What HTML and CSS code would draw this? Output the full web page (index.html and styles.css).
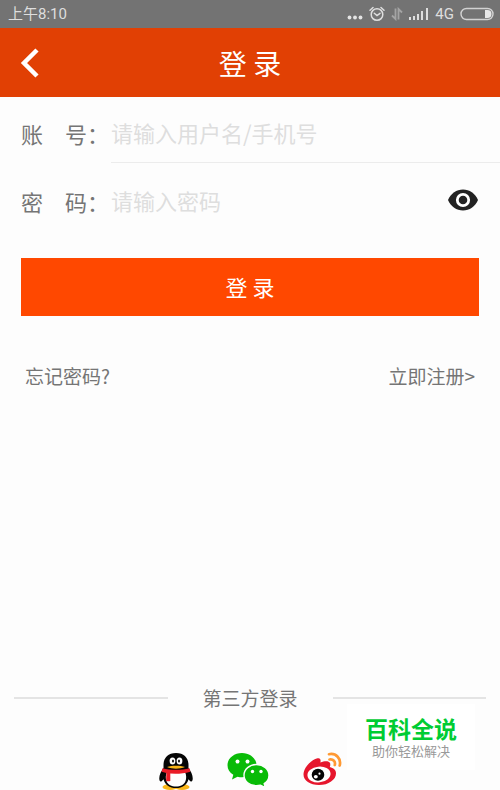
FILE: index.html
```html
<!DOCTYPE html>
<html lang="zh-CN">
<head>
    <meta charset="UTF-8">
    <meta name="viewport" content="width=device-width, initial-scale=1.0">
    <title>登录</title>
    <link rel="stylesheet" href="styles.css">
</head>
<body>

    <div class="status-bar">
        <span class="time">上午8:10</span>
        <div class="status-icons">
            <svg width="16" height="16" viewBox="0 0 16 16" fill="#e4e4e4">
                <circle cx="2.500" cy="11.500" r="1.900"/><circle cx="8" cy="11.500" r="1.900"/><circle cx="13.500" cy="11.500" r="1.900"/>
            </svg>
            <svg width="16" height="16" viewBox="0 0 16 16" fill="none" stroke="#dedede" stroke-width="1.5" stroke-linecap="round">
                <circle cx="8" cy="8.5" r="5.8"/>
                <path d="M1 4.2 L4 1.5 M12 1.5 L15 4.2 M5.3 7.3 L8 9.6 L11 7.3"/>
            </svg>
            <svg width="12" height="14" viewBox="0 0 12 14" fill="none" stroke="#a4a4a4" stroke-width="1.8">
                <path d="M4.5 1.5 V12 L1 8.5 M7.5 12.5 V2 L11 5.5"/>
            </svg>
            <svg width="20" height="14" viewBox="0 0 20 14" fill="#dedede">
                <path d="M0 10h2v3H0z M4 9h2v4H4z M8 7h2v6H8z M12 4h2v9h-2z M17 1h2v12h-2z"/>
            </svg>
            <span class="network">4G</span>
            <svg width="34" height="14" viewBox="0 0 34 14">
                <rect x="1" y="1.5" width="32" height="11" rx="5.5" fill="none" stroke="#d2d2d2" stroke-width="1.4"/>
                <path d="M25 3h2.5a4 4 0 0 1 0 8H25z" fill="#e8e8e8"/>
            </svg>
        </div>
    </div>

    <header class="header">
        <a href="#" class="back" aria-label="返回">
            <svg width="20" height="30" viewBox="0 0 20 30" fill="none" stroke="#fff" stroke-width="4.500">
                <path d="M17 2 L4 15 L17 28"/>
            </svg>
        </a>
        <h1>登 录</h1>
    </header>

    <main class="content">
        <form class="login-form">
            <div class="field">
                <label for="account">账　号：</label>
                <div class="field-box line">
                    <input type="text" id="account" placeholder="请输入用户名/手机号">
                </div>
            </div>
            <div class="field">
                <label for="password">密　码：</label>
                <div class="field-box">
                    <input type="password" id="password" placeholder="请输入密码">
                    <button type="button" class="eye" aria-label="显示密码">
                        <svg width="32" height="22" viewBox="0 0 32 22">
                            <path d="M1 11C4 4.2 9.5 .5 16 .5S28 4.2 31 11C28 17.8 22.5 21.5 16 21.5S4 17.8 1 11z" fill="#222"/>
                            <circle cx="16" cy="11" r="5.7" fill="#222" stroke="#fff" stroke-width="2.8"/>
                        </svg>
                    </button>
                </div>
            </div>
            <button type="submit" class="login-btn">登 录</button>
        </form>

        <div class="links">
            <a href="#">忘记密码?</a>
            <a href="#">立即注册&gt;</a>
        </div>
    </main>

    <footer class="third-party">
        <div class="divider"><span>第三方登录</span></div>
        <div class="socials">
            <a href="#" aria-label="QQ">
                <svg width="34" height="38" viewBox="0 0 34 38">
                    <ellipse cx="11" cy="35" rx="7.5" ry="3" fill="#fab619"/>
                    <ellipse cx="23" cy="35" rx="7.5" ry="3" fill="#fab619"/>
                    <path d="M17 1C9 1 4.500 6 4.500 13v3C2 19.500 0 23.500 .3 27c.2 3 1.700 3.500 4.200 .2C6 33 10.500 36 17 36s11-3 12.500-8.800c2.500 3.300 4 2.800 4.200-.2C34 23.500 32 19.500 29.500 16v-3C29.500 6 25 1 17 1z" fill="#050505"/>
                    <path d="M8 20h18c1.500 3 1.500 6.500 .5 9-1.500 4-5 5.500-9.500 5.500s-8-1.500-9.500-5.500c-1-2.500-1-6 .5-9z" fill="#fff"/>
                    <path d="M3.500 16.300c8 2 19 2 27 0l.8 3.500c-5 1.500-10 2-15 2l-5-.2v7.300c-1.500 .6-3 .5-4.200 0l.3-8L2.700 19.800z" fill="#ea1c27"/>
                    <ellipse cx="13.500" cy="9" rx="2.900" ry="3.500" fill="#fff"/>
                    <ellipse cx="20.500" cy="9" rx="2.900" ry="3.500" fill="#fff"/>
                    <ellipse cx="14" cy="9" rx="1" ry="1.600" fill="#111"/>
                    <ellipse cx="20" cy="9" rx="1" ry="1.600" fill="#111"/>
                    <path d="M8 15c5-1.700 13-1.700 18 0-5 2.200-13 2.200-18 0z" fill="#fab619"/>
                </svg>
            </a>
            <a href="#" aria-label="微信">
                <svg width="42" height="36" viewBox="0 0 42 36">
                    <path d="M15 1C7 1 .5 6.300 .5 13.200c0 4 2.200 7.400 5.800 9.600L5 27.500l5.500-2.800c1.500 .4 3 .6 4.500 .6 8 0 14.500-5.400 14.500-12.100S23 1 15 1z" fill="#09bb07"/>
                    <path d="M29.500 12.500c-7 0-12.500 4.700-12.500 10.700s5.500 10.600 12.500 10.600c1.400 0 2.700-.2 4-.5l5 2.400-1.300-4c3-2 4.800-5 4.800-8.500 0-6-5.500-10.700-12.500-10.700z" fill="#09bb07" stroke="#fdfdfd" stroke-width="1.400"/>
                    <g fill="#fff">
                        <circle cx="10.500" cy="9.500" r="2"/><circle cx="20.500" cy="9.500" r="2"/>
                        <circle cx="25.500" cy="19.500" r="1.700"/><circle cx="34" cy="19.500" r="1.700"/>
                    </g>
                </svg>
            </a>
            <a href="#" aria-label="微博">
                <svg width="39" height="34" viewBox="0 0 39 34">
                    <path d="M14.500 6.300c2.500-.7 3.600 1 2.900 4.200 4.200-1.800 8.500-2 9.600 .6 .5 1.200 .3 2.600-.2 4 3.600 1 6.200 3 6.200 6.300C33 27.500 25.500 33 16 33 7 33 .5 28.700 .5 22.600 .5 15.500 8.500 7.500 14.500 6.300z" fill="#e6162d"/>
                    <ellipse cx="16" cy="22.500" rx="11.600" ry="7.900" fill="#fff" transform="rotate(-6 16 22.500)"/>
                    <ellipse cx="15" cy="22.800" rx="6.300" ry="6" fill="#050505"/>
                    <ellipse cx="12.800" cy="24.800" rx="2" ry="1.700" fill="#fff"/>
                    <circle cx="16.500" cy="21.700" r="1.100" fill="#fff"/>
                    <path d="M26 2.200c7-1.400 12.500 4.500 10.700 11.300M26.500 7.500c3.800-.6 6.200 2 5.300 5.500" fill="none" stroke="#ff9933" stroke-width="2.700" stroke-linecap="round"/>
                </svg>
            </a>
        </div>
    </footer>

    <div class="brand">
        <strong>百科全说</strong>
        <span>助你轻松解决</span>
    </div>

</body>
</html>
```
FILE: styles.css
```css
* {
    box-sizing: border-box;
}

body {
    margin: 0;
    min-height: 100vh;
    display: flex;
    flex-direction: column;
    position: relative;
    background-color: #fdfdfd;
    color: #757575;
    font-family: "Noto Sans CJK SC", sans-serif;
    font-size: 19px;
}

a {
    color: inherit;
    text-decoration: none;
}

svg {
    display: block;
}

h1 {
    margin: 0;
    font-size: 28px;
    font-weight: 400;
    line-height: 40px;
}

button {
    border: none;
    padding: 0;
    font-family: inherit;
    cursor: pointer;
}

.status-bar {
    display: flex;
    justify-content: space-between;
    align-items: center;
    height: 28px;
    padding: 0 6px 0 8px;
    background-color: #737373;
    color: #dedede;
    font-family: Roboto, "Noto Sans CJK SC", sans-serif;
    font-size: 15px;
    line-height: 30px;
}

.status-icons {
    display: flex;
    align-items: center;
    gap: 6px;
}

.header {
    display: flex;
    justify-content: center;
    align-items: center;
    position: relative;
    height: 69px;
    background-color: #e14004;
    color: #fff;
}

.back {
    position: absolute;
    left: 20px;
}

.login-form {
    display: flex;
    flex-direction: column;
    padding-top: 8px;
}

.field {
    display: flex;
    padding-left: 21px;
    margin-bottom: 10px;
    font-size: 22px;
}

.field label {
    width: 90px;
    line-height: 56px;
    white-space: nowrap;
}

.field-box {
    flex: 1;
    display: flex;
    align-items: flex-start;
    height: 58px;
    min-width: 0;
    padding-right: 21px;
}

.line {
    border-bottom: 1px solid #ececec;
}

.field input {
    flex: 1;
    min-width: 0;
    height: 54px;
    padding: 0;
    border: none;
    outline: none;
    background: transparent;
    color: #757575;
    font-family: inherit;
    font-size: 22px;
}

.field input::placeholder {
    color: #dedede;
}

.eye {
    height: 54px;
    background: transparent;
}

.login-btn {
    margin: 17px 21px 0;
    padding-bottom: 2px;
    height: 58px;
    background-color: #ff4800;
    color: #fff;
    font-size: 22px;
}

.links {
    display: flex;
    justify-content: space-between;
    padding: 46px 25px;
    line-height: 28px;
}

.third-party {
    margin-top: auto;
}

.divider {
    display: flex;
    align-items: center;
    gap: 35px;
    padding: 0 14px;
    line-height: 28px;
}

.divider::before,
.divider::after {
    content: '';
    flex: 1;
    height: 2px;
    background-color: #e4e4e4;
}

.socials {
    display: flex;
    justify-content: center;
    gap: 34px;
    padding-top: 40px;
}

/* brand badge over the bottom right corner */
.brand {
    position: absolute;
    right: 25px;
    bottom: 20px;
    display: flex;
    flex-direction: column;
    align-items: center;
    width: 128px;
    padding: 10px 0;
    background-color: #fff;
    font-size: 13px;
    line-height: 18px;
    color: #999;
}

.brand strong {
    color: #0c3;
    font-size: 23px;
    font-weight: 700;
    line-height: 28px;
}
```
